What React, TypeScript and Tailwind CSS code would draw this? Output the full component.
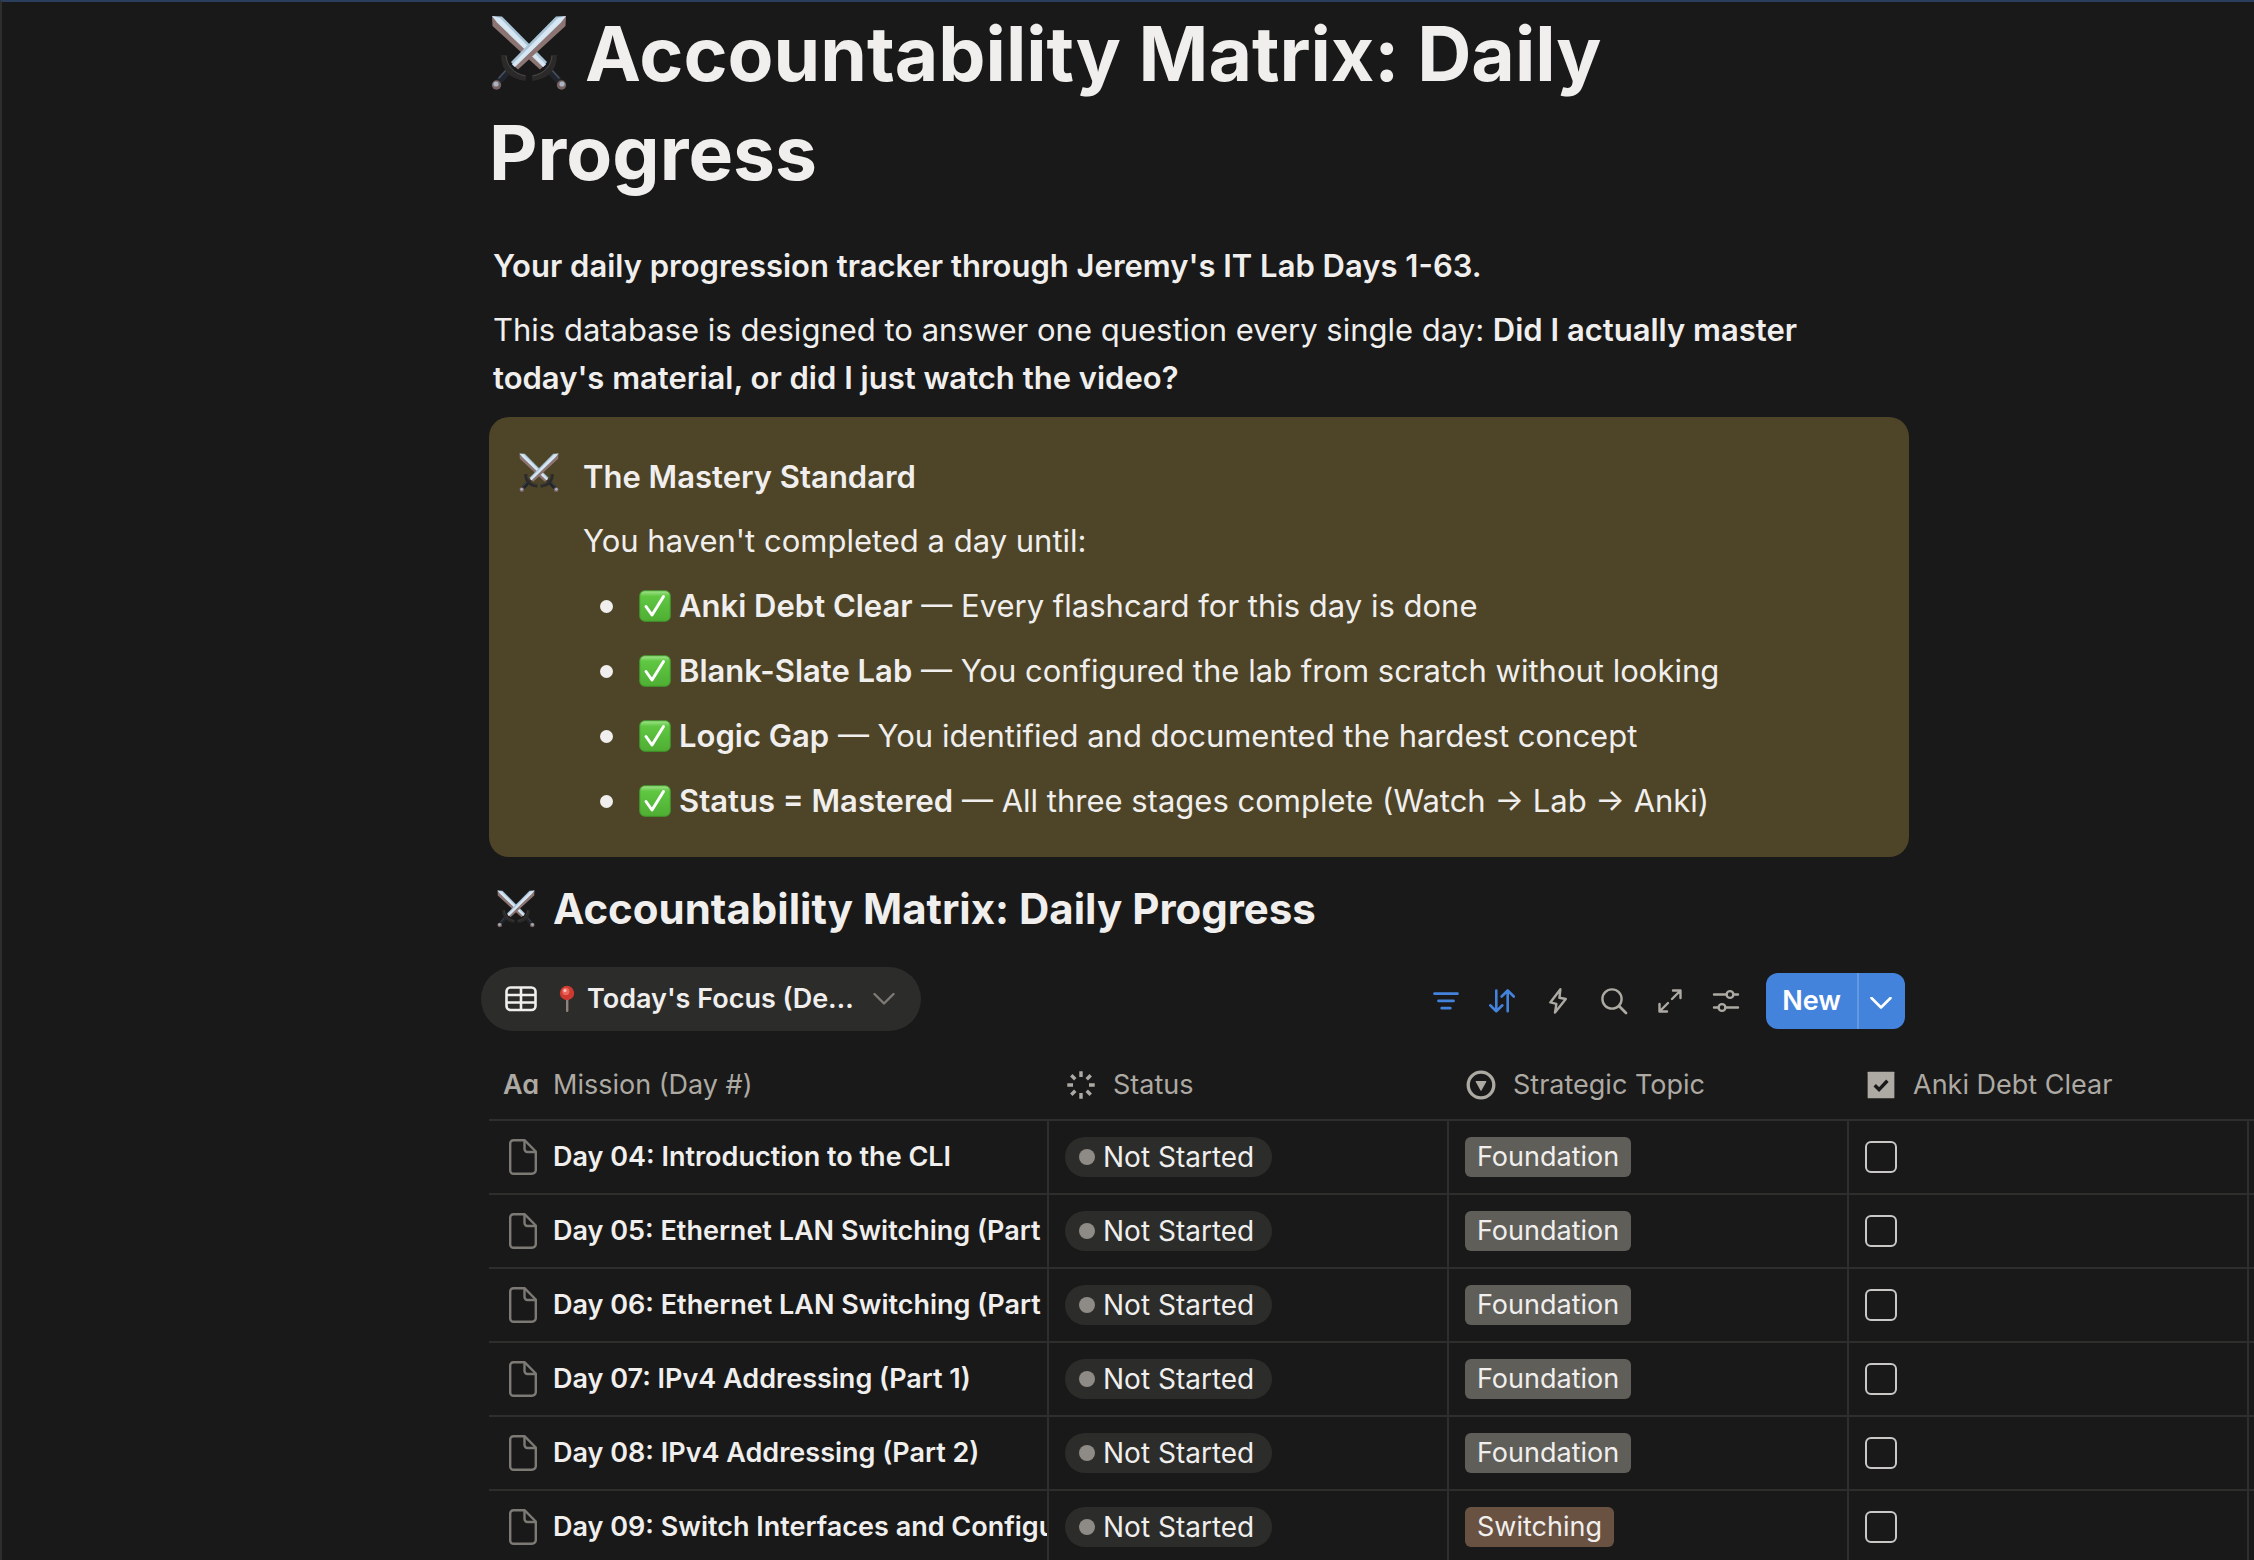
import { type ReactNode } from "react";

type Tone = "gray" | "brown";

interface Mission {
  title: string;
  status: string;
  topic: string;
  tone: Tone;
}

const missions: Mission[] = [
  { title: "Day 04: Introduction to the CLI", status: "Not Started", topic: "Foundation", tone: "gray" },
  { title: "Day 05: Ethernet LAN Switching (Part 1)", status: "Not Started", topic: "Foundation", tone: "gray" },
  { title: "Day 06: Ethernet LAN Switching (Part 2)", status: "Not Started", topic: "Foundation", tone: "gray" },
  { title: "Day 07: IPv4 Addressing (Part 1)", status: "Not Started", topic: "Foundation", tone: "gray" },
  { title: "Day 08: IPv4 Addressing (Part 2)", status: "Not Started", topic: "Foundation", tone: "gray" },
  { title: "Day 09: Switch Interfaces and Configuration", status: "Not Started", topic: "Switching", tone: "brown" },
];

const standards = [
  { name: "Anki Debt Clear", text: "Every flashcard for this day is done" },
  { name: "Blank-Slate Lab", text: "You configured the lab from scratch without looking" },
  { name: "Logic Gap", text: "You identified and documented the hardest concept" },
  { name: "Status = Mastered", text: "All three stages complete (Watch → Lab → Anki)" },
];

const toneClasses: Record<Tone, string> = {
  gray: "bg-[#5f5e59]",
  brown: "bg-[#6a5242]",
};

// One sword, hilt at the bottom left. The second one is the same shape mirrored.
function Sword() {
  return (
    <g>
      <path d="M75 1 L65 1.5 L20 47 L24 52 Z" fill="#a9c3d6" />
      <path d="M75 1 L74.5 11 L27 54.5 L22 50 Z" fill="#8b7472" />
      <path d="M75 1 L67 3 L21 49.5 L24 52 L70 7.5 Z" fill="#d6e6f2" />
      <path d="M19 54 L9 65" stroke="#20242c" strokeWidth="7" strokeLinecap="round" />
      <path d="M17 53 L8 63" stroke="#4a5160" strokeWidth="1.5" strokeLinecap="round" />
      <path d="M13 40 C13 53 20 61 35 63" fill="none" stroke="#2b2a29" strokeWidth="6" />
      <path d="M15 41 C16 51 22 58 34 61" fill="none" stroke="#4a4846" strokeWidth="1" />
      <circle cx="5.5" cy="70" r="4.7" fill="#75615f" />
      <circle cx="5" cy="69" r="2.6" fill="#aab4c2" />
    </g>
  );
}

function SwordsEmoji({ className }: { className: string }) {
  return (
    <svg viewBox="0 0 76 76" className={className} role="img" aria-label="Crossed swords">
      <g transform="matrix(-1 0 0 1 76 0)">
        <Sword />
      </g>
      <Sword />
    </svg>
  );
}

function CheckEmoji() {
  return (
    <svg viewBox="0 0 32 32" className="h-8 w-8 shrink-0" role="img" aria-label="Done">
      <defs>
        <linearGradient id="check-fill" x1="0" y1="0" x2="0" y2="1">
          <stop offset="0" stopColor="#a5e48f" />
          <stop offset="0.18" stopColor="#5fc742" />
          <stop offset="1" stopColor="#4fae33" />
        </linearGradient>
      </defs>
      <rect x="0.75" y="0.75" width="30.5" height="30.5" rx="5" fill="url(#check-fill)" stroke="#3f9a2a" />
      <path d="M7 16.5 L13 25 L24.5 6.5" fill="none" stroke="#fff" strokeWidth="3" strokeLinecap="round" strokeLinejoin="round" />
    </svg>
  );
}

function PinEmoji() {
  return (
    <svg viewBox="0 0 16 28" className="h-7 w-4 shrink-0" role="img" aria-label="Pin">
      <rect x="7" y="13" width="2.4" height="14" rx="1" fill="#8d847e" />
      <circle cx="8" cy="8" r="7.2" fill="#cf3a30" />
      <circle cx="6.8" cy="6.4" r="3.6" fill="#e9685c" />
      <circle cx="6" cy="5.4" r="1.5" fill="#f9c6be" />
    </svg>
  );
}

function Icon({ children, className = "size-7" }: { children: ReactNode; className?: string }) {
  return (
    <svg
      viewBox="0 0 28 28"
      className={`${className} shrink-0`}
      fill="none"
      stroke="currentColor"
      strokeWidth="2.4"
      strokeLinecap="round"
      strokeLinejoin="round"
      aria-hidden="true"
    >
      {children}
    </svg>
  );
}

function TableIcon() {
  return (
    <svg viewBox="0 0 32 26" className="h-[26px] w-8 shrink-0" fill="none" stroke="currentColor" strokeWidth="2.6" aria-hidden="true">
      <rect x="1.5" y="1.5" width="29" height="22.5" rx="4" />
      <path d="M1.5 9H30.5M1.5 16.5H30.5M16 1.5V24" />
    </svg>
  );
}

function PageIcon() {
  return (
    <svg viewBox="0 0 28 36" className="h-9 w-7 shrink-0 text-[#7d7a75]" fill="none" stroke="currentColor" strokeWidth="2.4" strokeLinejoin="round" aria-hidden="true">
      <path d="M4.5 1.2 H15.5 L26.8 12.5 V31 A3.8 3.8 0 0 1 23 34.8 H4.5 A3.3 3.3 0 0 1 1.2 31.5 V4.5 A3.3 3.3 0 0 1 4.5 1.2 Z" />
      <path d="M15.5 1.5 V10 A3 3 0 0 0 18.5 13 H26.5" />
    </svg>
  );
}

const tools = [
  {
    label: "Filter",
    active: true,
    icon: <path strokeWidth="2.7" d="M2.5 6.7H25.5M6.5 13.9H21.5M9.7 21.2H18.3" />,
  },
  {
    label: "Sort",
    active: true,
    icon: <path strokeWidth="2.6" d="M8.3 3.5V24.3M2.2 18.3L8.3 24.3L14.4 18.3M19.7 24.3V3.5M13.6 9.5L19.7 3.5L25.8 9.5" />,
  },
  {
    label: "Automations",
    active: false,
    icon: <path d="M16.4 2.2L6.3 15.4L12.4 16.8L11 25.6L21.8 12L15.4 10.8Z" />,
  },
  {
    label: "Search",
    active: false,
    icon: (
      <>
        <circle cx="12" cy="12" r="9.6" />
        <path d="M19 19L26 26" strokeWidth="2.8" />
      </>
    ),
  },
  {
    label: "Expand",
    active: false,
    icon: <path d="M16 12L24.5 3.5M17 3.5H24.5V11M12 16L3.5 24.5M3.5 17V24.5H11" />,
  },
  {
    label: "View settings",
    active: false,
    icon: (
      <>
        <path d="M2 7.5H14.5M21.5 7.5H26M2 20.5H6.5M13.5 20.5H26" />
        <circle cx="18" cy="7.5" r="3.4" />
        <circle cx="10" cy="20.5" r="3.4" />
      </>
    ),
  },
];

function Toolbar() {
  return (
    <div className="flex items-center justify-between">
      <button type="button" className="-ml-2 flex h-16 items-center rounded-full bg-[#2c2c2a] px-6 text-[27px] font-semibold text-[#f0efed]">
        <TableIcon />
        <span className="ml-[22px] flex items-center gap-3">
          <PinEmoji />
          <span className="block w-[268px] truncate text-left">Today's Focus (Default)</span>
        </span>
        <svg viewBox="0 0 22 12" className="mr-[2px] ml-[18px] h-3 w-[22px] text-[#7d7a75]" fill="none" stroke="currentColor" strokeWidth="2.4" strokeLinecap="round" strokeLinejoin="round" aria-hidden="true">
          <path d="M1.5 1L11 10.5L20.5 1" />
        </svg>
      </button>
      <div className="flex items-center pt-1 pr-1">
        {tools.map((tool) => (
          <button
            key={tool.label}
            type="button"
            aria-label={tool.label}
            className={`flex h-14 w-14 items-center justify-center ${tool.active ? "text-[#4483dc]" : "text-[#ada9a3]"}`}
          >
            <Icon>{tool.icon}</Icon>
          </button>
        ))}
        <div className="ml-3 flex h-14 overflow-hidden rounded-xl bg-[#4483dc] text-white">
          <button type="button" className="w-[91px] text-[27px] font-semibold">
            New
          </button>
          <button type="button" aria-label="New options" className="flex w-12 items-center justify-center border-l-2 border-[#6398e2] pr-[2px]">
            <svg viewBox="0 0 22 12" className="mt-1 h-3 w-[22px]" fill="none" stroke="currentColor" strokeWidth="2.6" strokeLinecap="round" strokeLinejoin="round" aria-hidden="true">
              <path d="M1.5 1L11 10.5L20.5 1" />
            </svg>
          </button>
        </div>
      </div>
    </div>
  );
}

function HeaderCell({ icon, label }: { icon: ReactNode; label: string }) {
  return (
    <th scope="col" className="h-[70px] border-b-2 border-[#2e2e2d] px-4 text-left font-normal text-[#ada9a3]">
      <span className="flex items-center gap-4 whitespace-nowrap">
        {icon}
        {label}
      </span>
    </th>
  );
}

function MissionTable() {
  return (
    <table className="w-[1765px] table-fixed border-separate border-spacing-0 text-[27px]">
      <colgroup>
        <col className="w-[560px]" />
        <col className="w-[400px]" />
        <col className="w-[400px]" />
        <col className="w-[400px]" />
        <col />
      </colgroup>
      <thead>
        <tr>
          <th scope="col" className="h-[70px] border-b-2 border-[#2e2e2d] pl-[14px] text-left font-normal text-[#ada9a3]">
            <span className="flex items-center">
              <span className="w-[50px] font-semibold [font-feature-settings:'cv11']" aria-hidden="true">Aa</span>
              Mission (Day #)
            </span>
          </th>
          <HeaderCell
            label="Status"
            icon={
              <Icon className="size-8">
                <path strokeWidth="3" strokeLinecap="butt" d="M14 2V7M14 21V26M2 14H7M21 14H26M5.5 5.5L9 9M19 19L22.5 22.5M5.5 22.5L9 19M19 9L22.5 5.5" />
              </Icon>
            }
          />
          <HeaderCell
            label="Strategic Topic"
            icon={
              <Icon className="size-8">
                <circle cx="14" cy="14" r="11.2" strokeWidth="2.9" />
                <path d="M9.8 11H18.2L14 18.5Z" fill="currentColor" strokeWidth="1" />
              </Icon>
            }
          />
          <HeaderCell
            label="Anki Debt Clear"
            icon={
              <Icon className="size-8">
                <rect x="2.3" y="2.3" width="23.4" height="23.4" rx="0.5" fill="currentColor" stroke="none" />
                <path d="M8.5 14.2L12.3 18L19.6 10.3" stroke="#191919" strokeWidth="3" strokeLinecap="butt" strokeLinejoin="miter" />
              </Icon>
            }
          />
          <td className="border-b-2 border-[#2e2e2d]" />
        </tr>
      </thead>
      <tbody>
        {missions.map((mission) => (
          <tr key={mission.title}>
            <td className="h-[74px] overflow-hidden border-r-2 border-b-2 border-[#2e2e2d] pl-5">
              <a href="#" className="flex items-center gap-4 font-semibold whitespace-nowrap text-[#f0efed]">
                <PageIcon />
                {mission.title}
              </a>
            </td>
            <td className="border-r-2 border-b-2 border-[#2e2e2d] px-4">
              <span className="flex h-10 w-fit items-center gap-2 rounded-full bg-[#2c2c2a] pr-[18px] pl-[14px] text-[28px] text-[#f0efed]">
                <span className="size-4 rounded-full bg-[#8e8b86]" />
                {mission.status}
              </span>
            </td>
            <td className="border-r-2 border-b-2 border-[#2e2e2d] px-4">
              <span className={`flex h-10 w-fit items-center rounded-md px-3 text-[#f0efed] ${toneClasses[mission.tone]}`}>
                {mission.topic}
              </span>
            </td>
            <td className="border-r-2 border-b-2 border-[#2e2e2d] px-4">
              <input
                type="checkbox"
                aria-label={`Anki debt clear for ${mission.title}`}
                className="block size-8 appearance-none rounded-md border-2 border-[#c9c8c6]"
              />
            </td>
            <td className="border-b-2 border-[#2e2e2d]" />
          </tr>
        ))}
      </tbody>
    </table>
  );
}

export default function App() {
  return (
    <div className="h-screen overflow-hidden border-t-2 border-l-2 border-t-[#2b3f5c] border-l-[#2e2e2d] bg-[#191919] pl-[487px] font-['Inter','Liberation_Sans',sans-serif] text-[#f0efed]">
      <main className="pt-[2px]">
        <div className="max-w-[1420px]">
          <h1 className="text-[75px] leading-[99px] font-bold">
            <SwordsEmoji className="mr-[18px] ml-[2px] inline-block size-[76px] -translate-y-2" />
            Accountability Matrix: Daily Progress
          </h1>

          <div className="mt-10 pr-12 pl-1 text-[31px] leading-[48px]">
            <p className="font-semibold">Your daily progression tracker through Jeremy's IT Lab Days 1-63.</p>
            <p className="mt-4">
              This database is designed to answer one question every single day:{" "}
              <strong className="font-semibold">Did I actually master today's material, or did I just watch the video?</strong>
            </p>
          </div>

          <aside className="mt-[15px] flex gap-6 rounded-[20px] bg-[#4e4428] px-[30px] pt-9 pb-8 text-[31px] leading-[48px]">
            <SwordsEmoji className="size-10 shrink-0" />
            <div>
              <p className="font-semibold">The Mastery Standard</p>
              <p className="mt-4">You haven't completed a day until:</p>
              <ul>
                {standards.map((item) => (
                  <li key={item.name} className="mt-[17px] flex items-center pl-[17px]">
                    <span className="mr-[26px] size-[13px] rounded-full bg-[#f0efed]" />
                    <CheckEmoji />
                    <span className="ml-2">
                      <strong className="font-semibold">{item.name}</strong> — {item.text}
                    </span>
                  </li>
                ))}
              </ul>
            </div>
          </aside>

          <h2 className="mt-6 flex items-center gap-[18px] pl-2 text-[42px] leading-[56px] font-bold">
            <SwordsEmoji className="size-[38px] shrink-0" />
            Accountability Matrix: Daily Progress
          </h2>

          <div className="mt-[30px]">
            <Toolbar />
          </div>
        </div>

        <div className="mt-5">
          <MissionTable />
        </div>
      </main>
    </div>
  );
}
